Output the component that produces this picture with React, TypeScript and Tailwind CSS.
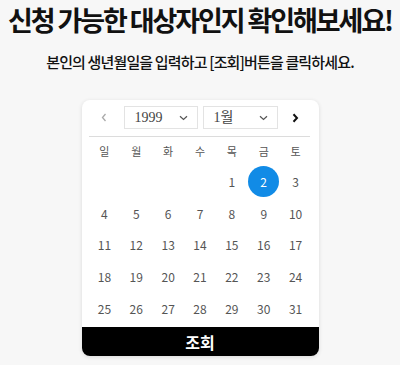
import React from 'react';

const weekdays = ['일', '월', '화', '수', '목', '금', '토'];

// the month starts on a Thursday in the picker
const cells: (number | null)[] = [
  null, null, null, null,
  ...Array.from({ length: 31 }, (_, i) => i + 1),
];

const sans = "font-['Noto_Sans_CJK_KR','Noto_Sans',sans-serif]";

function ChevronDown() {
  return (
    <svg width="9" height="6" viewBox="0 0 9 6" fill="none" className="shrink-0">
      <path d="M1 1.2 L4.5 4.5 L8 1.2" stroke="#555" strokeWidth="1.2" />
    </svg>
  );
}

function Select({ value, className }: { value: string; className?: string }) {
  return (
    <div
      className={`flex h-[23px] items-center justify-between border border-[#e3e3e3] bg-white pl-[10px] pr-[9px] ${className ?? ''}`}
    >
      <span className="font-['Liberation_Serif','Noto_Sans_CJK_KR',serif] text-[14px] leading-none text-[#444]">
        {value}
      </span>
      <ChevronDown />
    </div>
  );
}

export default function App() {
  return (
    <div className={`h-[365px] w-[400px] overflow-hidden bg-[#f7f7f7] ${sans}`}>
      <h1 className="pt-[2px] text-center text-[27px] leading-[36px] font-bold tracking-[-2.1px] text-[#111]">
        신청 가능한 대상자인지 확인해보세요!
      </h1>
      <p className="mt-[13px] text-center text-[15px] leading-[22px] font-medium tracking-[-0.85px] text-[#111]">
        본인의 생년월일을 입력하고 [조회]버튼을 클릭하세요.
      </p>

      <div className="mx-auto mt-[27px] w-[237px] rounded-[8px] bg-white shadow-[0_1px_4px_rgba(0,0,0,0.12)]">
        <div className="px-[7px] pt-[6px]">
          <div className="flex h-[23px] items-center">
            <div className="flex w-[35px] items-center justify-center pr-[4px]">
              <svg width="6" height="9" viewBox="0 0 6 9" fill="none">
                <path d="M4.5 1 L1.5 4.5 L4.5 8" stroke="#aaa" strokeWidth="1.3" />
              </svg>
            </div>
            <Select value="1999" className="w-[74px]" />
            <Select value="1월" className="ml-[5px] w-[75px]" />
            <div className="flex flex-1 items-center justify-center pl-[2px]">
              <svg width="7" height="10" viewBox="0 0 7 10" fill="none">
                <path d="M1.5 1.2 L5 5 L1.5 8.8" stroke="#111" strokeWidth="2" />
              </svg>
            </div>
          </div>
          <div className="mt-[7px] mr-[2px] h-px bg-[#dcdcdc]" />

          <div className="grid grid-cols-7">
            {weekdays.map((d) => (
              <div
                key={d}
                className="flex h-[29px] items-center justify-center text-[11px] text-[#555]"
              >
                {d}
              </div>
            ))}
            {cells.map((n, i) => (
              <div key={i} className="flex h-[31.7px] items-center justify-center">
                {n !== null &&
                  (n === 2 ? (
                    <span className="flex h-[31px] w-[31px] items-center justify-center rounded-full bg-[#118be6] text-[12px] text-white">
                      {n}
                    </span>
                  ) : (
                    <span className="text-[12px] text-[#555]">{n}</span>
                  ))}
              </div>
            ))}
          </div>
        </div>

        <button className="mt-[3px] flex h-[29px] w-full items-center justify-center rounded-b-[8px] bg-black text-[16px] font-bold text-white">
          조회
        </button>
      </div>
    </div>
  );
}
